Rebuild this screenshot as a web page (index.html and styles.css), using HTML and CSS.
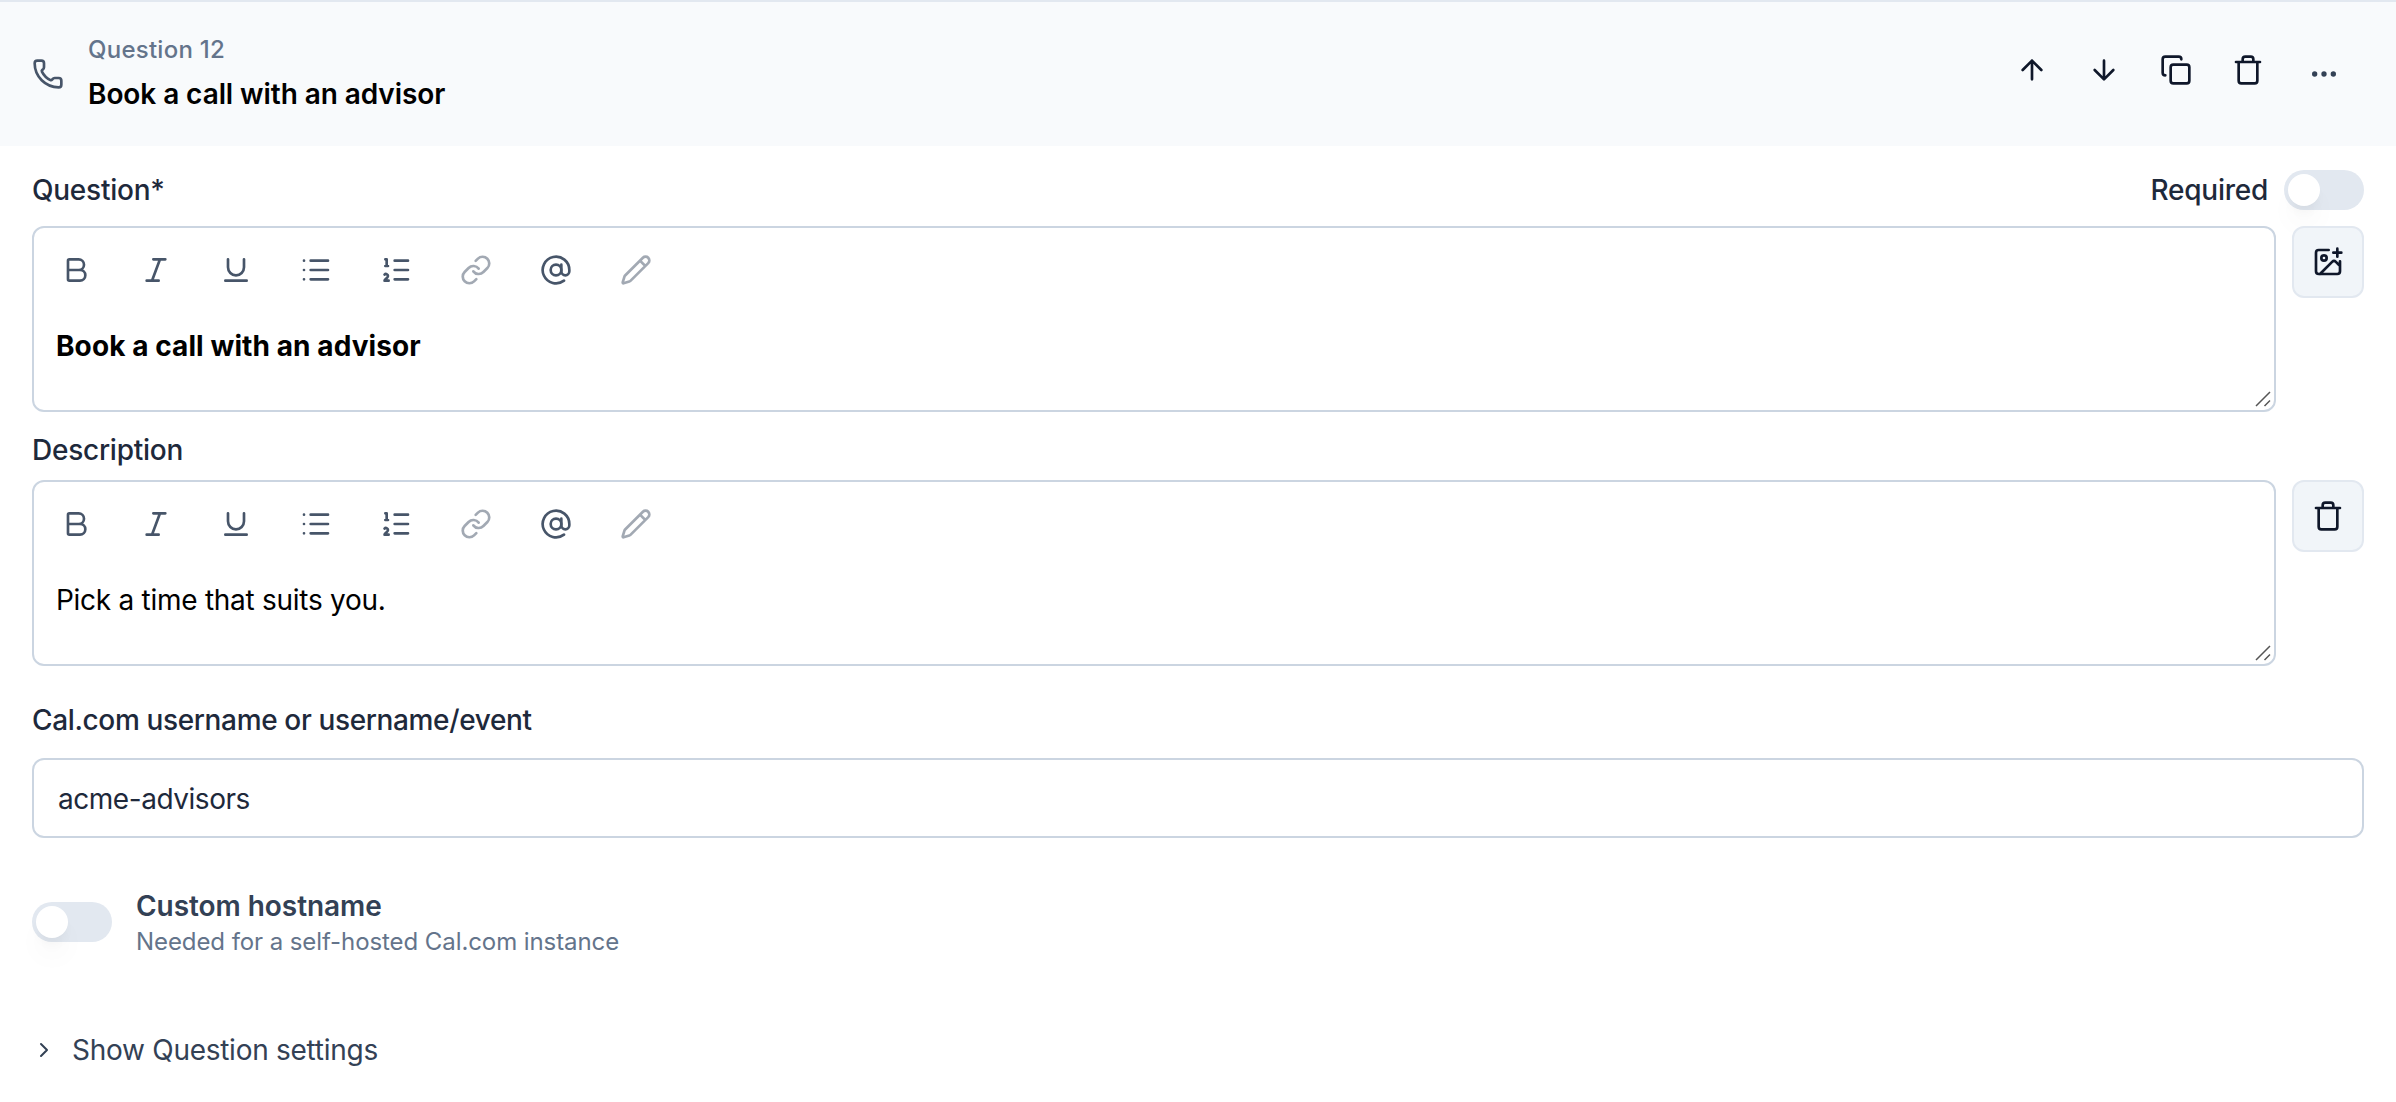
FILE: index.html
```html
<!DOCTYPE html>
<html lang="en">
<head>
<meta charset="utf-8">
<title>Question 12</title>
<link rel="stylesheet" href="styles.css">
</head>
<body>
<svg class="sprite" aria-hidden="true">
  <symbol id="bold" viewBox="0 0 24 24"><path d="M6 12h9a4 4 0 0 1 0 8H7a1 1 0 0 1-1-1V5a1 1 0 0 1 1-1h7a4 4 0 0 1 0 8"/></symbol>
  <symbol id="italic" viewBox="0 0 24 24"><path d="M19 4h-9M14 20H5M15 4 9 20"/></symbol>
  <symbol id="underline" viewBox="0 0 24 24"><path d="M6 4v6a6 6 0 0 0 12 0V4M4 20h16"/></symbol>
  <symbol id="list" viewBox="0 0 24 24"><path d="M3 5h.01M3 12h.01M3 19h.01M8 5h13M8 12h13M8 19h13"/></symbol>
  <symbol id="ordered" viewBox="0 0 24 24"><path d="M11 5h10M11 12h10M11 19h10M4 4h1v5M4 9h2M6.5 20H3.4c0-1 2.6-1.925 2.6-3.5a1.5 1.5 0 0 0-2.6-1.02"/></symbol>
  <symbol id="link" viewBox="0 0 24 24"><path d="M10 13a5 5 0 0 0 7.54.54l3-3a5 5 0 0 0-7.07-7.07l-1.72 1.71M14 11a5 5 0 0 0-7.54-.54l-3 3a5 5 0 0 0 7.07 7.07l1.71-1.71"/></symbol>
  <symbol id="at" viewBox="0 0 24 24"><circle cx="12" cy="12" r="4"/><path d="M16 8v5a3 3 0 0 0 6 0v-1a10 10 0 1 0-4 8"/></symbol>
  <symbol id="pencil" viewBox="0 0 24 24"><path d="M21.174 6.812a1 1 0 0 0-3.986-3.987L3.842 16.174a2 2 0 0 0-.5.83l-1.321 4.352a.5.5 0 0 0 .623.622l4.353-1.32a2 2 0 0 0 .83-.497zM15 5l4 4"/></symbol>
  <symbol id="trash" viewBox="0 0 24 24"><path d="M3 6h18M19 6v14a2 2 0 0 1-2 2H7a2 2 0 0 1-2-2V6M8 6V4a2 2 0 0 1 2-2h4a2 2 0 0 1 2 2v2"/></symbol>
  <symbol id="grip" viewBox="0 0 16 16"><path d="M1 15 15 1M9.5 15 15 9.5"/></symbol>
</svg>

<header class="head">
  <svg class="icon phone" viewBox="0 0 24 24"><path d="M13.832 16.568a1 1 0 0 0 1.213-.303l.355-.465A2 2 0 0 1 17 15h3a2 2 0 0 1 2 2v3a2 2 0 0 1-2 2A18 18 0 0 1 2 4a2 2 0 0 1 2-2h3a2 2 0 0 1 2 2v3a2 2 0 0 1-.8 1.6l-.468.351a1 1 0 0 0-.292 1.233 14 14 0 0 0 6.392 6.384"/></svg>
  <div class="titles">
    <div class="eyebrow">Question 12</div>
    <h1 class="title">Book a call with an advisor</h1>
  </div>
  <div class="actions">
    <button class="action"><svg class="icon" viewBox="0 0 24 24"><path d="m5 12 7-7 7 7M12 19V5"/></svg></button>
    <button class="action"><svg class="icon" viewBox="0 0 24 24"><path d="M12 5v14M19 12l-7 7-7-7"/></svg></button>
    <button class="action"><svg class="icon" viewBox="0 0 24 24"><rect width="14" height="14" x="8" y="8" rx="2"/><path d="M4 16c-1.1 0-2-.9-2-2V4c0-1.1.9-2 2-2h10c1.1 0 2 .9 2 2"/></svg></button>
    <button class="action"><svg class="icon"><use href="#trash"/></svg></button>
    <button class="action more"><svg class="icon" viewBox="0 0 24 24"><circle cx="5" cy="12" r="1"/><circle cx="12" cy="12" r="1"/><circle cx="19" cy="12" r="1"/></svg></button>
  </div>
</header>

<main class="body">
  <div class="label-row">
    <span class="label">Question*</span>
    <div class="required"><span class="label">Required</span><span class="switch"></span></div>
  </div>
  <div class="field">
    <div class="editor">
      <div class="toolbar">
        <svg class="icon"><use href="#bold"/></svg>
        <svg class="icon"><use href="#italic"/></svg>
        <svg class="icon"><use href="#underline"/></svg>
        <svg class="icon"><use href="#list"/></svg>
        <svg class="icon"><use href="#ordered"/></svg>
        <svg class="icon off"><use href="#link"/></svg>
        <svg class="icon"><use href="#at"/></svg>
        <svg class="icon off"><use href="#pencil"/></svg>
      </div>
      <p class="content strong">Book a call with an advisor</p>
      <svg class="grip"><use href="#grip"/></svg>
    </div>
    <button class="side"><svg class="icon small" viewBox="0 0 24 24"><path d="M16 5h6M19 2v6M21 11.5V19a2 2 0 0 1-2 2H5a2 2 0 0 1-2-2V5a2 2 0 0 1 2-2h7.5M21 15l-3.086-3.086a2 2 0 0 0-2.828 0L6 21"/><circle cx="9" cy="9" r="2"/></svg></button>
  </div>

  <div class="label-row desc"><span class="label">Description</span></div>
  <div class="field">
    <div class="editor">
      <div class="toolbar">
        <svg class="icon"><use href="#bold"/></svg>
        <svg class="icon"><use href="#italic"/></svg>
        <svg class="icon"><use href="#underline"/></svg>
        <svg class="icon"><use href="#list"/></svg>
        <svg class="icon"><use href="#ordered"/></svg>
        <svg class="icon off"><use href="#link"/></svg>
        <svg class="icon"><use href="#at"/></svg>
        <svg class="icon off"><use href="#pencil"/></svg>
      </div>
      <p class="content">Pick a time that suits you.</p>
      <svg class="grip"><use href="#grip"/></svg>
    </div>
    <button class="side"><svg class="icon"><use href="#trash"/></svg></button>
  </div>

  <div class="label-row user"><span class="label">Cal.com username or username/event</span></div>
  <div class="input">acme-advisors</div>

  <div class="option">
    <span class="switch"></span>
    <div>
      <div class="option-title">Custom hostname</div>
      <div class="option-hint">Needed for a self-hosted Cal.com instance</div>
    </div>
  </div>

  <div class="settings">
    <svg class="icon chevron" viewBox="0 0 24 24"><path d="m9 18 6-6-6-6"/></svg>
    <span>Show Question settings</span>
  </div>
</main>
</body>
</html>
```
FILE: styles.css
```css
* { box-sizing: border-box; }

body {
  margin: 0;
  background: #fff;
  color: #1e293b;
  font: 400 28px/40px Inter, "Liberation Sans", sans-serif;
  font-optical-sizing: none;
  font-variation-settings: "opsz" 14;
  letter-spacing: -0.27px;
}

h1, p { margin: 0; font-size: inherit; }

button { padding: 0; border: 0; background: none; color: #0f172a; }

.sprite { display: none; }

.icon {
  display: block;
  flex: none;
  width: 32px;
  height: 32px;
  fill: none;
  stroke: currentColor;
  stroke-width: 2;
  stroke-linecap: round;
  stroke-linejoin: round;
}

.head {
  display: flex;
  align-items: center;
  height: 146px;
  padding: 0 32px;
  border-top: 2px solid #e2e8f0;
  background: #f8fafc;
}

.phone { color: #475569; }

.titles { margin-left: 24px; }

.eyebrow {
  margin-bottom: 8px;
  color: #64748b;
  font-size: 24px;
  font-weight: 500;
  line-height: 32px;
  letter-spacing: 0.26px;
}

.title { color: #000; font-weight: 600; letter-spacing: -0.08px; }

.actions { display: flex; align-items: center; margin-left: auto; }

.action {
  display: grid;
  place-items: center;
  width: 72px;
  height: 72px;
  margin-bottom: 8px;
}

.more { width: 80px; margin-bottom: 0; color: #334155; }

.body { padding: 24px 32px 0; }

.label-row { display: flex; justify-content: space-between; height: 40px; margin-bottom: 16px; }

.label { font-weight: 500; letter-spacing: -0.25px; }

.desc { margin: 18px 0 10px; }

.user { margin: 34px 0 18px; }

.user .label { letter-spacing: -0.36px; }

.required { display: flex; gap: 16px; }

.switch {
  flex: none;
  width: 80px;
  height: 40px;
  padding: 4px;
  border-radius: 20px;
  background: #e2e8f0;
}

.switch::before {
  content: "";
  display: block;
  width: 32px;
  height: 32px;
  border-radius: 50%;
  background: #fff;
  box-shadow: 0 20px 30px -6px rgb(0 0 0 / 0.07), 0 8px 12px -4px rgb(0 0 0 / 0.05);
}

.field { display: flex; align-items: flex-start; gap: 16px; }

.editor {
  position: relative;
  flex: 1;
  height: 186px;
  padding: 26px 22px 0;
  border: 2px solid #cbd5e1;
  border-radius: 12px;
}

.toolbar { display: flex; gap: 48px; padding-left: 4px; color: #475569; }

.off { opacity: 0.5; }

.content { margin-top: 40px; color: #000; }

.strong { font-weight: 700; letter-spacing: 0.09px; }

.grip {
  position: absolute;
  right: 3px;
  bottom: 3px;
  width: 16px;
  height: 16px;
  fill: none;
  stroke: #555;
  stroke-width: 1.5;
}

.side {
  display: grid;
  place-items: center;
  width: 72px;
  height: 72px;
  border: 2px solid #e2e8f0;
  border-radius: 12px;
  background: #f1f5f9;
}

.input {
  height: 80px;
  padding: 19px 24px 0;
  border: 2px solid #cbd5e1;
  border-radius: 12px;
  letter-spacing: -0.46px;
}

.option {
  display: flex;
  align-items: center;
  gap: 24px;
  height: 72px;
  margin-top: 48px;
}

.option-title { color: #334155; font-weight: 600; line-height: 39px; letter-spacing: -0.05px; }

.option-hint { color: #64748b; font-size: 24px; line-height: 32px; letter-spacing: -0.08px; }

.settings { display: flex; align-items: center; gap: 16px; margin-top: 72px; color: #334155; }

.chevron { width: 24px; height: 24px; }
```
